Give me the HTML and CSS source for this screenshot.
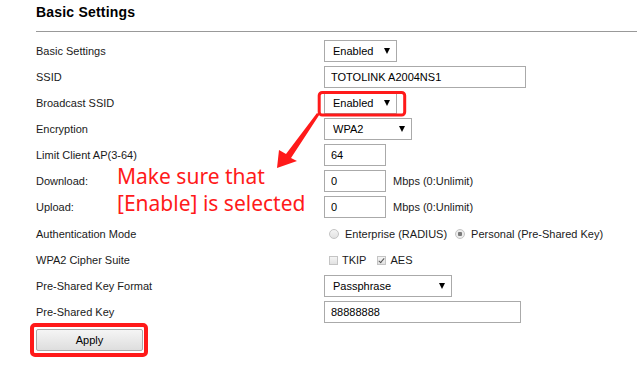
FILE: index.html
```html
<!DOCTYPE html>
<html lang="en">
<head>
    <meta charset="UTF-8">
    <meta name="viewport" content="width=device-width, initial-scale=1.0">
    <title>Basic Settings</title>
    <link rel="stylesheet" href="styles.css">
</head>
<body>
    <div class="page">
        <h2 class="title">Basic Settings</h2>

        <form class="settings">
            <div class="row">
                <label class="label">Basic Settings</label>
                <div class="field">
                    <span class="select select-short">
                        <select><option>Enabled</option><option>Disabled</option></select>
                    </span>
                </div>
            </div>
            <div class="row">
                <label class="label">SSID</label>
                <div class="field"><input class="text input-ssid" type="text" value="TOTOLINK A2004NS1"></div>
            </div>
            <div class="row">
                <label class="label">Broadcast SSID</label>
                <div class="field">
                    <span class="select select-short">
                        <select><option>Enabled</option><option>Disabled</option></select>
                    </span>
                </div>
            </div>
            <div class="row">
                <label class="label">Encryption</label>
                <div class="field">
                    <span class="select select-mid">
                        <select><option>WPA2</option><option>WPA</option><option>None</option></select>
                    </span>
                </div>
            </div>
            <div class="row">
                <label class="label">Limit Client AP(3-64)</label>
                <div class="field"><input class="text input-num" type="text" value="64"></div>
            </div>
            <div class="row">
                <label class="label">Download:</label>
                <div class="field">
                    <input class="text input-num" type="text" value="0">
                    <span class="unit">Mbps (0:Unlimit)</span>
                </div>
            </div>
            <div class="row">
                <label class="label">Upload:</label>
                <div class="field">
                    <input class="text input-num" type="text" value="0">
                    <span class="unit">Mbps (0:Unlimit)</span>
                </div>
            </div>
            <div class="row row-tall">
                <label class="label">Authentication Mode</label>
                <div class="field">
                    <label class="choice"><input class="radio" type="radio" name="auth" disabled>Enterprise (RADIUS)</label>
                    <label class="choice"><input class="radio" type="radio" name="auth" checked disabled>Personal (Pre-Shared Key)</label>
                </div>
            </div>
            <div class="row">
                <label class="label">WPA2 Cipher Suite</label>
                <div class="field">
                    <label class="choice choice-check"><input class="check" type="checkbox" disabled>TKIP</label>
                    <label class="choice choice-check"><input class="check" type="checkbox" checked disabled>AES</label>
                </div>
            </div>
            <div class="row">
                <label class="label">Pre-Shared Key Format</label>
                <div class="field">
                    <span class="select select-wide">
                        <select><option>Passphrase</option><option>Hex (64 characters)</option></select>
                    </span>
                </div>
            </div>
            <div class="row">
                <label class="label">Pre-Shared Key</label>
                <div class="field"><input class="text input-key" type="text" value="88888888"></div>
            </div>
            <div class="actions">
                <button class="apply" type="button">Apply</button>
            </div>
        </form>

        <!-- annotation layer -->
        <p class="note">Make sure that<br>[Enable] is selected</p>
        <svg class="marks" width="637" height="367" viewBox="0 0 637 367">
            <rect x="319.2" y="92.5" width="85.5" height="22.5" rx="3" fill="none" stroke="#ff1a1a" stroke-width="3"/>
            <rect x="32" y="325" width="114" height="30" rx="3" fill="none" stroke="#ff1a1a" stroke-width="4"/>
            <polygon points="277,168 279,150 286,154 317,113 319.5,114.5 291,158 297,161" fill="#ff1a1a"/>
        </svg>
    </div>
</body>
</html>
```

FILE: styles.css
```css
body {
    margin: 0;
    background: #fff;
    font-family: "Liberation Sans", Arial, sans-serif;
    font-size: 11px;
    color: #1a1a1a;
}
.page {
    position: relative;
    width: 637px;
    height: 367px;
    overflow: hidden;
}
.title {
    margin: 0 0 0 36px;
    padding: 4px 0 11px;
    font-size: 14px;
    line-height: 16px;
    font-weight: bold;
    letter-spacing: 0.2px;
    color: #000;
    border-bottom: 1px solid #999;
}
.settings {
    margin: 0;
    padding: 6px 0 0 36px;
}
.row {
    display: flex;
    align-items: center;
    height: 26px;
}
.row-tall {
    height: 27px;
}
.label {
    flex: none;
    width: 288px;
}
.field {
    display: flex;
    align-items: center;
}

/* text boxes */
.text {
    box-sizing: border-box;
    height: 22px;
    margin: 0;
    padding: 0 6px;
    border: 1px solid #aaa;
    border-radius: 0;
    font-family: inherit;
    font-size: 11px;
    color: #000;
}
.input-ssid { width: 202px; }
.input-num { width: 62px; }
.input-key { width: 197px; }
.unit {
    margin-left: 7px;
}

/* drop-downs */
.select {
    position: relative;
    display: inline-block;
}
.select select {
    box-sizing: border-box;
    width: 100%;
    height: 22px;
    margin: 0;
    padding: 0 18px 0 8px;
    border: 1px solid #aaa;
    border-radius: 0;
    background: #fff;
    font-family: inherit;
    font-size: 11px;
    color: #000;
    -webkit-appearance: none;
    appearance: none;
}
.select::after {
    content: "";
    position: absolute;
    right: 7px;
    top: 8px;
    border-left: 3px solid transparent;
    border-right: 3px solid transparent;
    border-top: 6px solid #000;
    pointer-events: none;
}
.select-short { width: 73px; }
.select-mid { width: 88px; }
.select-wide { width: 128px; }

/* radio + checkbox */
.choice {
    display: inline-flex;
    align-items: center;
    margin-right: 3px;
    color: #1a1a1a;
}
.choice-check {
    margin-right: 6px;
}
.radio,
.check {
    -webkit-appearance: none;
    appearance: none;
    box-sizing: border-box;
    margin: 0 6px 0 5px;
    border: 1px solid #c4c4c4;
    background: linear-gradient(#f4f4f4, #e2e2e2);
}
.radio {
    width: 10px;
    height: 10px;
    border-radius: 50%;
}
.radio:checked {
    background: radial-gradient(circle, #7a7a7a 0 2px, #ececec 2.5px);
}
.check {
    position: relative;
    width: 9px;
    height: 9px;
    margin-right: 4px;
}
.check:checked::after {
    content: "";
    position: absolute;
    left: 2px;
    top: 0;
    width: 2px;
    height: 5px;
    border-right: 1.5px solid #555;
    border-bottom: 1.5px solid #555;
    transform: rotate(40deg);
}

/* apply */
.actions {
    padding-top: 4px;
}
.apply {
    box-sizing: border-box;
    width: 107px;
    height: 22px;
    margin: 0;
    border: 1px solid #aaa;
    border-radius: 2px;
    background: linear-gradient(#f5f5f5, #dedede);
    font-family: inherit;
    font-size: 11px;
    color: #000;
    cursor: pointer;
}

/* red annotation */
.note {
    position: absolute;
    left: 117px;
    top: 163px;
    margin: 0;
    font-family: "Noto Sans", "Open Sans", sans-serif;
    font-size: 21px;
    line-height: 27px;
    color: #ff1a1a;
}
.marks {
    position: absolute;
    left: 0;
    top: 0;
    pointer-events: none;
}
```
